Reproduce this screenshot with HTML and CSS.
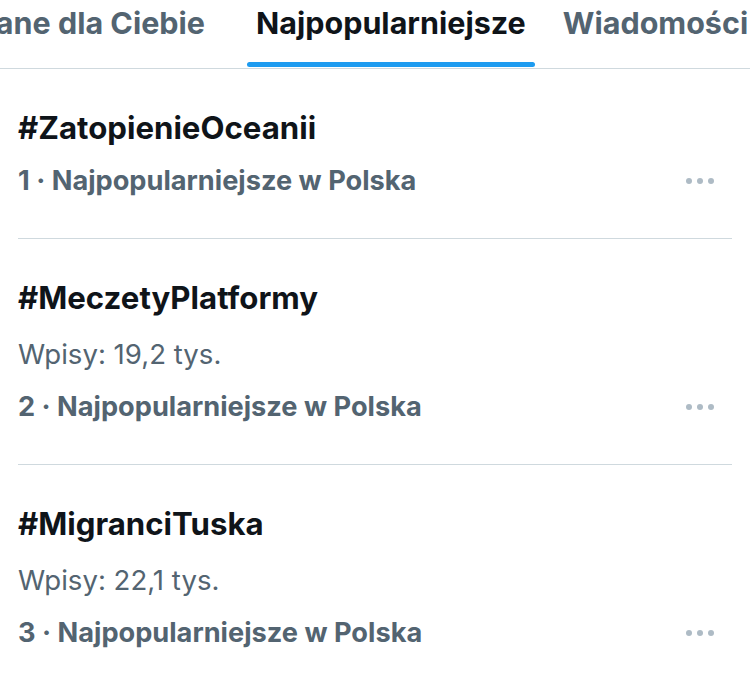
FILE: index.html
```html
<!DOCTYPE html>
<html lang="pl">
<head>
<meta charset="utf-8">
<link rel="stylesheet" href="styles.css">
</head>
<body>
<nav class="tabs">
  <div class="tab first"><span>Polecane dla Ciebie</span></div>
  <div class="tab active">Najpopularniejsze</div>
  <div class="tab">Wiadomości</div>
</nav>
<main class="list">
  <article class="trend">
    <div class="info">
      <div class="title">#ZatopienieOceanii</div>
      <div class="meta">1 · Najpopularniejsze w Polska</div>
    </div>
    <div class="more"><svg viewBox="0 0 28 6" width="28" height="6"><circle cx="3" cy="3" r="3"/><circle cx="14" cy="3" r="3"/><circle cx="25" cy="3" r="3"/></svg></div>
  </article>
  <article class="trend">
    <div class="info">
      <div class="title">#MeczetyPlatformy</div>
      <div class="count">Wpisy: 19,2 tys.</div>
      <div class="meta">2 · Najpopularniejsze w Polska</div>
    </div>
    <div class="more"><svg viewBox="0 0 28 6" width="28" height="6"><circle cx="3" cy="3" r="3"/><circle cx="14" cy="3" r="3"/><circle cx="25" cy="3" r="3"/></svg></div>
  </article>
  <article class="trend">
    <div class="info">
      <div class="title">#MigranciTuska</div>
      <div class="count">Wpisy: 22,1 tys.</div>
      <div class="meta">3 · Najpopularniejsze w Polska</div>
    </div>
    <div class="more"><svg viewBox="0 0 28 6" width="28" height="6"><circle cx="3" cy="3" r="3"/><circle cx="14" cy="3" r="3"/><circle cx="25" cy="3" r="3"/></svg></div>
  </article>
</main>
</body>
</html>
```

FILE: styles.css
```css
html, body {
  margin: 0;
  padding: 0;
  background: #ffffff;
}
body {
  font-family: Inter, "Liberation Sans", sans-serif;
  color: #0f1419;
  width: 750px;
  height: 675px;
  overflow: hidden;
}
.tabs {
  display: flex;
  height: 68px;
  border-bottom: 1px solid #cfd9de;
  overflow: hidden;
  white-space: nowrap;
}
.tab {
  flex: none;
  font-size: 30.5px;
  font-weight: 700;
  line-height: 40px;
  color: #536471;
  padding-top: 3px;
}
.tab.first {
  width: 205px;
  display: flex;
  justify-content: flex-end;
  overflow: hidden;
  margin-right: 42px;
}
.tab.active {
  color: #0f1419;
  position: relative;
  padding: 3px 9px 0;
  margin-right: 28px;
}
.tab.active::after {
  content: "";
  position: absolute;
  left: 0;
  right: 0;
  top: 62px;
  height: 5px;
  border-radius: 3px;
  background: #1d9bf0;
}
.list {
  padding: 0 18px;
}
.trend {
  display: flex;
  align-items: flex-end;
  justify-content: space-between;
  padding: 41px 0 40px;
  border-bottom: 1px solid #cfd9de;
}
.trend:last-child {
  border-bottom: none;
}
.info {
  display: flex;
  flex-direction: column;
}
.title {
  font-size: 31.2px;
  font-weight: 700;
  line-height: 36px;
}
.count {
  font-size: 27.6px;
  line-height: 34px;
  color: #536471;
  margin-top: 21px;
}
.meta {
  font-size: 27.2px;
  font-weight: 700;
  line-height: 34px;
  color: #536471;
  margin-top: 18px;
}
.count + .meta {
  margin-top: 19px;
}
.more {
  display: flex;
  fill: #aebbc5;
  margin-right: 18px;
  margin-bottom: 14px;
}
```
